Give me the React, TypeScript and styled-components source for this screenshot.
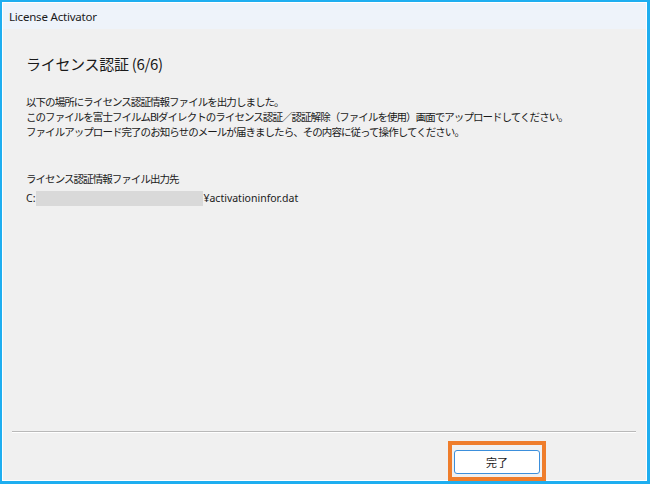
import React from "react";
import styled, { createGlobalStyle } from "styled-components";

const GlobalStyle = createGlobalStyle`
  html, body {
    margin: 0;
    padding: 0;
    background: #ffffff;
  }
  * {
    box-sizing: border-box;
  }
`;

const Window = styled.div`
  width: 650px;
  height: 484px;
  display: flex;
  flex-direction: column;
  border-style: solid;
  border-color: #1eaef0;
  border-width: 2px 3px 3px 2px;
  box-shadow: inset 0 0 0 1px #ffffff;
  background: #f0f0f0;
  font-family: "Noto Sans CJK JP", "Noto Sans", sans-serif;
  color: #1a1a1a;
`;

const TitleBar = styled.div`
  height: 26px;
  display: flex;
  align-items: center;
  padding: 0 6px;
  margin: 1px 1px 0 1px;
  background: #eef3fa;
  font-family: "Noto Sans", "Noto Sans CJK JP", sans-serif;
  font-size: 11.5px;
  letter-spacing: -0.2px;
`;

const Body = styled.div`
  flex: 1;
  display: flex;
  flex-direction: column;
  padding: 25px 0 0 24px;
`;

const Heading = styled.div`
  font-size: 15px;
  line-height: 20px;
  letter-spacing: -0.3px;
  margin-bottom: 20px;
`;

const Paragraph = styled.div`
  font-size: 10.5px;
  line-height: 15px;
  letter-spacing: -0.95px;
`;

const Label = styled(Paragraph)`
  margin-top: 32px;
  line-height: 16px;
`;

const PathRow = styled.div`
  display: flex;
  align-items: center;
  margin-top: 3px;
  font-size: 10.5px;
  line-height: 16px;
  font-family: "Noto Sans", "Noto Sans CJK JP", sans-serif;
`;

const Redacted = styled.span`
  display: inline-block;
  width: 167px;
  height: 15px;
  background: #d9d9d9;
  margin-left: 1px;
`;

const Footer = styled.div`
  display: flex;
  flex-direction: column;
`;

const Separator = styled.div`
  height: 2px;
  margin: 0 11px 0 10px;
  border-top: 1px solid #b9b9b9;
  border-bottom: 1px solid #ffffff;
`;

const ButtonRow = styled.div`
  display: flex;
  justify-content: flex-end;
  padding: 8px 101px 0 0;
`;

const Highlight = styled.div`
  border: 4px solid #ef7d2b;
  padding: 3px 2px;
`;

const Button = styled.button`
  width: 86px;
  height: 24px;
  border: 1px solid #3b8fdc;
  border-radius: 3px;
  background: #ffffff;
  font-family: "Noto Sans CJK JP", sans-serif;
  font-size: 11px;
  color: #1a1a1a;
  padding: 0;
`;

const App: React.FC = () => {
  return (
    <>
      <GlobalStyle />
      <Window>
        <TitleBar>License Activator</TitleBar>
        <Body>
          <Heading>ライセンス認証 (6/6)</Heading>
          <Paragraph>以下の場所にライセンス認証情報ファイルを出力しました。</Paragraph>
          <Paragraph>
            このファイルを富士フイルムBIダイレクトのライセンス認証／認証解除（ファイルを使用）画面でアップロードしてください。
          </Paragraph>
          <Paragraph>
            ファイルアップロード完了のお知らせのメールが届きましたら、その内容に従って操作してください。
          </Paragraph>
          <Label>ライセンス認証情報ファイル出力先</Label>
          <PathRow>
            C:
            <Redacted />
            ¥activationinfor.dat
          </PathRow>
        </Body>
        <Footer>
          <Separator />
          <ButtonRow>
            <Highlight>
              <Button>完了</Button>
            </Highlight>
          </ButtonRow>
        </Footer>
      </Window>
    </>
  );
};

export default App;
